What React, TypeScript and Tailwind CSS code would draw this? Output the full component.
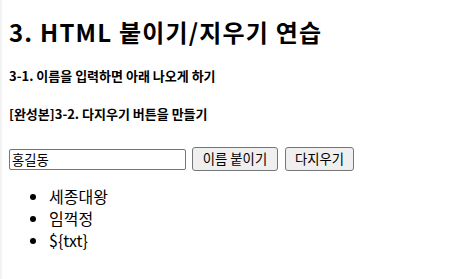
import React, { useState } from 'react';

const font = "font-['Malgun_Gothic','Noto_Sans_CJK_KR','Noto_Sans',sans-serif]";

export default function App() {
  const [name, setName] = useState('홍길동');
  const [items, setItems] = useState<string[]>(['세종대왕', '임꺽정', '${txt}']);

  return (
    <div className={`min-h-[279px] w-full bg-white border-l-2 border-[#f3f3f3] pl-[7px] pt-px text-black ${font}`}>
      {/* Title */}
      <h1 className="mt-[15px] text-[24px] font-bold leading-[32px] tracking-[1.2px]">3. HTML 붙이기/지우기 연습</h1>

      <h5 className="mt-[19px] text-[13px] font-bold leading-[18px]">3-1. 이름을 입력하면 아래 나오게 하기</h5>
      <h5 className="mt-[20px] text-[13px] font-bold leading-[18px]">[완성본]3-2. 다지우기 버튼을 만들기</h5>

      {/* Form row */}
      <div className="mt-[24px] flex h-[24px] items-center">
        <input
          value={name}
          onChange={(e) => setName(e.target.value)}
          className="h-[21px] w-[177px] rounded-[2px] border border-[#767676] px-[2px] text-[13.33px] leading-[17px] outline-none"
        />
        <button
          onClick={() => name && setItems([...items, name])}
          className="ml-[6px] h-[24px] w-[86px] rounded-[3px] border border-[#767676] bg-[#efefef] text-[13.33px] leading-[20px]"
        >
          이름 붙이기
        </button>
        <button
          onClick={() => setItems([])}
          className="ml-[7px] h-[24px] w-[69px] rounded-[3px] border border-[#767676] bg-[#efefef] text-[13.33px] leading-[20px]"
        >
          다지우기
        </button>
      </div>

      {/* List */}
      <ul className="mt-[14px] list-disc pl-[40px] text-[16px] leading-[22px]">
        {items.map((it, i) => (
          <li key={i}>{it}</li>
        ))}
      </ul>
    </div>
  );
}
